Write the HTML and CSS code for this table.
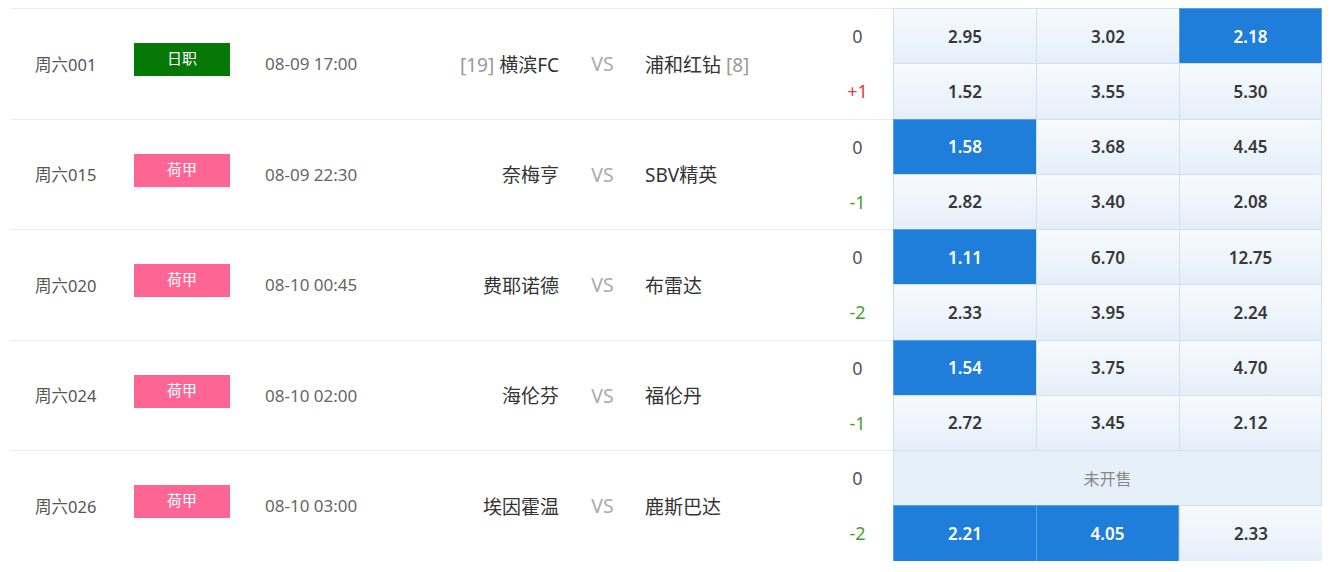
FILE: index.html
```html
<!DOCTYPE html>
<html lang="zh-CN">
<head>
    <meta charset="UTF-8">
    <title>竞彩足球</title>
    <link rel="stylesheet" href="styles.css">
</head>
<body>
    <div class="match-list">
        <div class="match">
            <div class="info">
                <div class="code">周六001</div>
                <div class="league"><span class="badge badge-jl">日职</span></div>
                <div class="time">08-09 17:00</div>
                <div class="home"><span class="rank">[19]</span> 横滨FC</div>
                <div class="vs">VS</div>
                <div class="away">浦和红钻 <span class="rank">[8]</span></div>
                <div class="handicap">
                    <span>0</span>
                    <span class="plus">+1</span>
                </div>
            </div>
            <div class="odds">
                <div class="cell">2.95</div>
                <div class="cell">3.02</div>
                <div class="cell on">2.18</div>
                <div class="cell">1.52</div>
                <div class="cell">3.55</div>
                <div class="cell">5.30</div>
            </div>
        </div>

        <div class="match">
            <div class="info">
                <div class="code">周六015</div>
                <div class="league"><span class="badge badge-nl">荷甲</span></div>
                <div class="time">08-09 22:30</div>
                <div class="home">奈梅亨</div>
                <div class="vs">VS</div>
                <div class="away">SBV精英</div>
                <div class="handicap">
                    <span>0</span>
                    <span class="minus">-1</span>
                </div>
            </div>
            <div class="odds">
                <div class="cell on">1.58</div>
                <div class="cell">3.68</div>
                <div class="cell">4.45</div>
                <div class="cell">2.82</div>
                <div class="cell">3.40</div>
                <div class="cell">2.08</div>
            </div>
        </div>

        <div class="match">
            <div class="info">
                <div class="code">周六020</div>
                <div class="league"><span class="badge badge-nl">荷甲</span></div>
                <div class="time">08-10 00:45</div>
                <div class="home">费耶诺德</div>
                <div class="vs">VS</div>
                <div class="away">布雷达</div>
                <div class="handicap">
                    <span>0</span>
                    <span class="minus">-2</span>
                </div>
            </div>
            <div class="odds">
                <div class="cell on">1.11</div>
                <div class="cell">6.70</div>
                <div class="cell">12.75</div>
                <div class="cell">2.33</div>
                <div class="cell">3.95</div>
                <div class="cell">2.24</div>
            </div>
        </div>

        <div class="match">
            <div class="info">
                <div class="code">周六024</div>
                <div class="league"><span class="badge badge-nl">荷甲</span></div>
                <div class="time">08-10 02:00</div>
                <div class="home">海伦芬</div>
                <div class="vs">VS</div>
                <div class="away">福伦丹</div>
                <div class="handicap">
                    <span>0</span>
                    <span class="minus">-1</span>
                </div>
            </div>
            <div class="odds">
                <div class="cell on">1.54</div>
                <div class="cell">3.75</div>
                <div class="cell">4.70</div>
                <div class="cell">2.72</div>
                <div class="cell">3.45</div>
                <div class="cell">2.12</div>
            </div>
        </div>

        <div class="match">
            <div class="info">
                <div class="code">周六026</div>
                <div class="league"><span class="badge badge-nl">荷甲</span></div>
                <div class="time">08-10 03:00</div>
                <div class="home">埃因霍温</div>
                <div class="vs">VS</div>
                <div class="away">鹿斯巴达</div>
                <div class="handicap">
                    <span>0</span>
                    <span class="minus">-2</span>
                </div>
            </div>
            <div class="odds">
                <div class="cell closed">未开售</div>
                <div class="cell on">2.21</div>
                <div class="cell on">4.05</div>
                <div class="cell">2.33</div>
            </div>
        </div>
    </div>
</body>
</html>
```

FILE: styles.css
```css
body {
    margin: 0;
    background: #fff;
    font-family: "Noto Sans", "Noto Sans CJK SC", sans-serif;
    font-size: 16px;
    color: #333;
}
.match-list {
    padding: 8px 0 0 11px;
    width: 1311px;
}
.match {
    display: flex;
}
.info {
    display: grid;
    grid-template-columns: 123px 96px 170px 159px 86px 175px 73px;
    align-items: center;
    width: 882px;
    height: 110.5px;
    border-top: 1px solid #ebebeb;
    box-sizing: border-box;
}
.code {
    padding-left: 24px;
    color: #555;
    font-size: 16.5px;
}
.badge {
    display: block;
    height: 33px;
    line-height: 31px;
    margin-bottom: 8px;
    text-align: center;
    color: #fff;
    font-size: 15px;
}
.badge-jl {
    background: #067806;
}
.badge-nl {
    background: #fd6694;
}
.time {
    padding-left: 35px;
    color: #666;
    font-size: 17px;
}
.home,
.away {
    font-size: 19px;
}
.home {
    text-align: right;
}
.vs {
    text-align: center;
    color: #aaa;
    font-size: 19.5px;
    padding-left: 1px;
}
.away {
    text-align: left;
}
.rank {
    color: #999;
}
.handicap {
    display: flex;
    flex-direction: column;
    align-self: stretch;
    color: #555;
    font-size: 18px;
}
.handicap span {
    flex: 1;
    display: flex;
    align-items: center;
    justify-content: center;
    padding-left: 2px;
}
.handicap .plus {
    color: #e03c3c;
}
.handicap .minus {
    color: #41a22c;
}
.odds {
    display: grid;
    grid-template-columns: repeat(3, 143px);
    grid-template-rows: 55px 55.5px;
    width: 429px;
}
.cell {
    display: flex;
    align-items: center;
    justify-content: center;
    font-weight: 600;
    font-size: 17px;
    color: #383838;
    background: linear-gradient(#f7fafd, #e5eff9);
    border-top: 1px solid #d2e1ef;
    border-left: 1px solid #d2e1ef;
    box-sizing: border-box;
}
.cell:nth-child(3n) {
    border-right: 1px solid #d2e1ef;
}
.cell.on {
    background: #1f7ed9;
    color: #fff;
    border-color: #5a9fe2;
}
.cell.closed {
    grid-column: span 3;
    background: #e6f0f9;
    color: #888;
    font-weight: normal;
    font-size: 16px;
    border-right: 1px solid #d2e1ef;
}
```
